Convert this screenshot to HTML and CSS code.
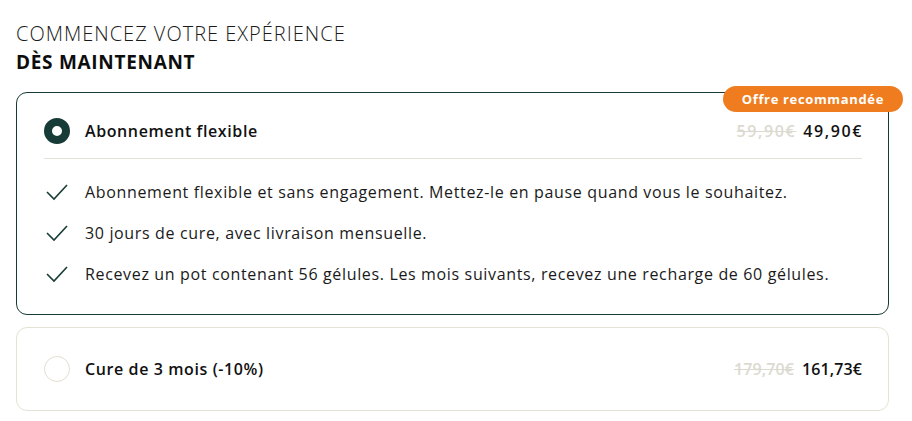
FILE: index.html
```html
<!DOCTYPE html>
<html lang="fr">
<head>
<meta charset="utf-8">
<link rel="stylesheet" href="styles.css">
</head>
<body>
<main class="page">
  <h1 class="title"><span class="title-light">COMMENCEZ VOTRE EXPÉRIENCE</span><span class="title-bold">DÈS MAINTENANT</span></h1>

  <section class="card card-active">
    <span class="badge">Offre recommandée</span>
    <div class="card-head">
      <span class="radio radio-on"></span>
      <span class="plan">Abonnement flexible</span>
      <span class="prices"><s class="old">59,90€</s><span class="new">49,90€</span></span>
    </div>
    <ul class="features">
      <li><svg class="check" viewBox="0 0 22 18" width="22" height="18"><polyline points="1,9 8,16 21,2" fill="none" stroke="#173d38" stroke-width="1.6"/></svg><span>Abonnement flexible et sans engagement. Mettez-le en pause quand vous le souhaitez.</span></li>
      <li><svg class="check" viewBox="0 0 22 18" width="22" height="18"><polyline points="1,9 8,16 21,2" fill="none" stroke="#173d38" stroke-width="1.6"/></svg><span>30 jours de cure, avec livraison mensuelle.</span></li>
      <li><svg class="check" viewBox="0 0 22 18" width="22" height="18"><polyline points="1,9 8,16 21,2" fill="none" stroke="#173d38" stroke-width="1.6"/></svg><span>Recevez un pot contenant 56 gélules. Les mois suivants, recevez une recharge de 60 gélules.</span></li>
    </ul>
  </section>

  <section class="card card-idle">
    <div class="card-head card-head-idle">
      <span class="radio radio-off"></span>
      <span class="plan">Cure de 3 mois (-10%)</span>
      <span class="prices prices-narrow"><s class="old">179,70€</s><span class="new">161,73€</span></span>
    </div>
  </section>
</main>
</body>
</html>
```
FILE: styles.css
```css
* { box-sizing: border-box; }
html, body { margin: 0; background: #ffffff; }
body {
  font-family: "Open Sans", "Noto Sans", sans-serif;
  color: #111111;
}
.page {
  width: 912px;
  padding: 20px 23px 0 16px;
}
.title {
  margin: 0;
  display: flex;
  flex-direction: column;
  line-height: 28px;
}
.title-light { font-weight: 300; font-size: 20px; letter-spacing: 1px; color: #1a1a1a; }
.title-bold { font-weight: 700; font-size: 19px; letter-spacing: 0.7px; color: #0d0d0d; }

.card {
  position: relative;
  width: 873px;
  border-radius: 11px;
  background: #fff;
}
.card-active {
  margin-top: 16px;
  border: 1px solid #173b36;
  padding: 25px 26px 29px 27px;
}
.card-idle {
  margin-top: 12px;
  border: 1px solid #e4e2d4;
  padding: 28px 26px 28px 27px;
}
.badge {
  position: absolute;
  top: -7px;
  right: -15px;
  height: 26px;
  padding: 0 19px;
  border-radius: 13px;
  background: #ef7d1f;
  color: #fff;
  font-size: 13px;
  font-weight: 700;
  line-height: 26px;
  letter-spacing: 0.65px;
}
.card-head {
  display: flex;
  align-items: center;
  height: 26px;
  box-sizing: content-box;
  padding-bottom: 14px;
  border-bottom: 1px solid #e4e2d4;
}
.card-head-idle { padding-bottom: 0; border-bottom: 0; }
.radio {
  width: 26px;
  height: 26px;
  border-radius: 50%;
  flex: none;
}
.radio-on { border: 8px solid #173b36; background: #fff; }
.radio-off { border: 1px solid #e2dfcf; background: #fff; }
.plan {
  margin-left: 15px;
  font-size: 16px;
  font-weight: 600;
  letter-spacing: 0.6px;
  color: #111;
}
.prices {
  margin-left: auto;
  display: flex;
  gap: 7px;
  font-size: 16px;
  font-weight: 600;
  letter-spacing: 1.6px;
  margin-right: -1px;
}
.prices-narrow { letter-spacing: 0.1px; gap: 8px; margin-right: 0; }
.old { color: #dcdad0; text-decoration: line-through; }
.new { color: #111; }

.features {
  list-style: none;
  margin: 22px 0 0;
  padding: 0;
  display: flex;
  flex-direction: column;
  gap: 19px;
}
.features li {
  display: flex;
  align-items: center;
  height: 22px;
  font-size: 16px;
  letter-spacing: 0.65px;
  color: #1a1a1a;
}
.check { flex: none; margin-left: 2px; margin-right: 17px; }
```
